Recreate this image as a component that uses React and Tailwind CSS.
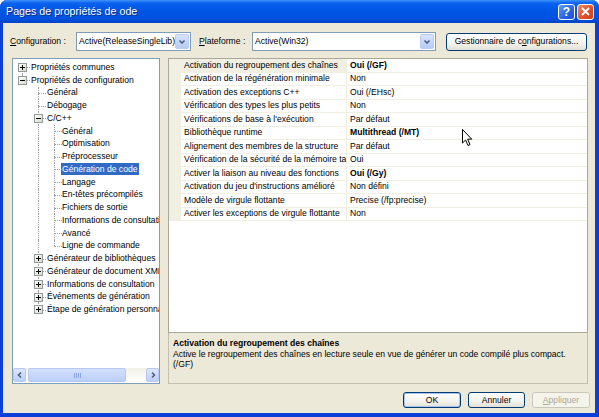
import React from "react";

const tree = [
  { t: "Propriétés communes", l: 0, box: "+", first: true, cont: [] },
  { t: "Propriétés de configuration", l: 0, box: "-", last: true, cont: [] },
  { t: "Général", l: 1, cont: [false] },
  { t: "Débogage", l: 1, cont: [false] },
  { t: "C/C++", l: 1, box: "-", cont: [false] },
  { t: "Général", l: 2, cont: [false, true] },
  { t: "Optimisation", l: 2, cont: [false, true] },
  { t: "Préprocesseur", l: 2, cont: [false, true] },
  { t: "Génération de code", l: 2, sel: true, cont: [false, true] },
  { t: "Langage", l: 2, cont: [false, true] },
  { t: "En-têtes précompilés", l: 2, cont: [false, true] },
  { t: "Fichiers de sortie", l: 2, cont: [false, true] },
  { t: "Informations de consultation", l: 2, cont: [false, true] },
  { t: "Avancé", l: 2, cont: [false, true] },
  { t: "Ligne de commande", l: 2, last: true, cont: [false, true] },
  { t: "Générateur de bibliothèques", l: 1, box: "+", cont: [false] },
  { t: "Générateur de document XML", l: 1, box: "+", cont: [false] },
  { t: "Informations de consultation", l: 1, box: "+", cont: [false] },
  { t: "Événements de génération", l: 1, box: "+", cont: [false] },
  { t: "Étape de génération personnalisée", l: 1, box: "+", last: true, cont: [false] },
];

// connector positions per level (x of the vertical guide)
const guideLeft = ["left-[9px]", "left-[25px]", "left-[41px]"];
const boxLeft = ["left-[5px]", "left-[21px]", "left-[37px]"];
const textPad = ["pl-[17px]", "pl-[33px]", "pl-[48px]"];

const props = [
  ["Activation du regroupement des chaînes", "Oui (/GF)", true],
  ["Activation de la régénération minimale", "Non"],
  ["Activation des exceptions C++", "Oui (/EHsc)"],
  ["Vérification des types les plus petits", "Non"],
  ["Vérifications de base à l'exécution", "Par défaut"],
  ["Bibliothèque runtime", "Multithread (/MT)", true],
  ["Alignement des membres de la structure", "Par défaut"],
  ["Vérification de la sécurité de la mémoire tampon", "Oui"],
  ["Activer la liaison au niveau des fonctions", "Oui (/Gy)", true],
  ["Activation du jeu d'instructions amélioré", "Non défini"],
  ["Modèle de virgule flottante", "Precise (/fp:precise)"],
  ["Activer les exceptions de virgule flottante", "Non"],
];

function Chevron({ dir = "down" }) {
  const d = {
    down: "M1.5 2.5 L4 5 L6.5 2.5",
    left: "M5 1.5 L2.5 4 L5 6.5",
    right: "M3 1.5 L5.5 4 L3 6.5",
  }[dir];
  return (
    <svg width="8" height="8" viewBox="0 0 8 8">
      <path d={d} fill="none" stroke="#4d6185" strokeWidth="1.6" />
    </svg>
  );
}

function Combo({ width, text }) {
  return (
    <div className={`${width} h-[19px] bg-white border border-[#7f9db9] flex items-center`}>
      <span className="flex-1 pl-[2px] truncate">{text}</span>
      <div className="w-[14px] h-[15px] mr-[1px] rounded-[2px] border border-[#b9cdf5] bg-[linear-gradient(to_bottom,#d8e4fd,#b7cbf6)] flex items-center justify-center">
        <Chevron />
      </div>
    </div>
  );
}

function XpButton({ children, className = "", isDefault, disabled }) {
  if (disabled) {
    return (
      <div className={`h-[16px] rounded-[3px] border border-[#c9c7ba] bg-[#f5f4ea] text-[#aca899] flex items-center justify-center ${className}`}>
        {children}
      </div>
    );
  }
  return (
    <div className={`h-[16px] rounded-[3px] border border-[#003c74] bg-[linear-gradient(to_bottom,#ffffff,#f3f2ec_60%,#e3e1d6)] flex items-center justify-center ${isDefault ? "shadow-[inset_0_0_0_1px_#a9c3f0]" : ""} ${className}`}>
      {children}
    </div>
  );
}

function TreeRow({ item }) {
  const l = item.l;
  return (
    <div className="relative h-[12.75px] flex items-center whitespace-nowrap">
      {item.cont.map((c, a) =>
        c ? <div key={a} className={`absolute top-0 bottom-0 ${guideLeft[a]} border-l border-dotted border-[#a0a0a0]`} /> : null
      )}
      <div
        className={`absolute ${guideLeft[l]} border-l border-dotted border-[#a0a0a0] ${item.first ? "top-1/2" : "top-0"} ${item.last ? "bottom-1/2" : "bottom-0"}`}
      />
      <div className={`absolute top-1/2 ${guideLeft[l]} w-[8px] border-t border-dotted border-[#a0a0a0]`} />
      {item.box && (
        <div className={`absolute top-[2px] ${boxLeft[l]} w-[9px] h-[9px] border border-[#919b9c] bg-[linear-gradient(135deg,#ffffff,#dcd9c9)] flex items-center justify-center`}>
          <div className="relative w-[5px] h-[5px]">
            <div className="absolute left-0 right-0 top-[2px] h-[1px] bg-black" />
            {item.box === "+" && <div className="absolute top-0 bottom-0 left-[2px] w-[1px] bg-black" />}
          </div>
        </div>
      )}
      <div className={textPad[l]}>
        <span className={`px-[1px] py-[1px] ${item.sel ? "bg-[#316ac5] text-white" : ""}`}>{item.t}</span>
      </div>
    </div>
  );
}

export default function App() {
  return (
    <div className="relative w-[599px] h-[417px] flex flex-col bg-[#0b3fd8] rounded-t-[7px] overflow-hidden font-['Liberation_Sans',Arial,sans-serif] text-[8.6px] text-black">
      {/* title bar */}
      <div className="h-[23px] shrink-0 flex items-center pl-[6px] pr-[5px] bg-[linear-gradient(to_bottom,#3d92fa_0%,#0a62ef_14%,#0056e6_45%,#0052e0_80%,#0043c8_100%)]">
        <span className="flex-1 text-white text-[10.7px] [text-shadow:1px_1px_0_#0a2a8a]">Pages de propriétés de ode</span>
        <div className="w-[17px] h-[16px] rounded-[3px] border border-white bg-[linear-gradient(135deg,#5e9cff,#2762ea_60%,#1e50d6)] flex items-center justify-center text-white font-bold text-[12px] leading-none">
          ?
        </div>
        <div className="ml-[2px] w-[17px] h-[16px] rounded-[3px] border border-white bg-[linear-gradient(135deg,#f08a62,#e0532b_55%,#c8401a)] flex items-center justify-center">
          <svg width="9" height="9" viewBox="0 0 9 9">
            <path d="M1 1 L8 8 M8 1 L1 8" stroke="white" strokeWidth="1.8" />
          </svg>
        </div>
      </div>

      {/* dialog body */}
      <div className="flex-1 ml-[3px] mr-[4px] mb-[4px] bg-[#ece9d8] flex flex-col">
        <div className="mt-[9px] h-[19px] flex items-center pl-[7px]">
          <span className="w-[66px]">
            <u>C</u>onfiguration :
          </span>
          <Combo width="w-[115px]" text="Active(ReleaseSingleLib)" />
          <span className="ml-[8px] w-[53px]">
            <u>P</u>lateforme :
          </span>
          <Combo width="w-[184px]" text="Active(Win32)" />
          <XpButton className="ml-[10px] w-[141px] !h-[18px]">
            <span>
              Gestionnaire de c<u>o</u>nfigurations...
            </span>
          </XpButton>
        </div>

        <div className="mt-[7px] flex pl-[9px]">
          {/* tree */}
          <div className="w-[148px] h-[326px] border border-[#7f9db9] bg-white flex flex-col">
            <div className="flex-1 overflow-hidden pt-[2px]">
              {tree.map((item, i) => (
                <TreeRow key={i} item={item} />
              ))}
            </div>
            <div className="h-[14px] mb-[1px] flex items-stretch bg-[linear-gradient(to_bottom,#f3f1e7,#fefefb)]">
              <div className="w-[13px] rounded-[2px] border border-[#b6c8f2] bg-[linear-gradient(to_bottom,#dde7fe,#bccff8)] flex items-center justify-center">
                <Chevron dir="left" />
              </div>
              <div className="ml-[2px] w-[98px] rounded-[2px] border border-[#b6c8f2] bg-[linear-gradient(to_bottom,#d4e1fd,#bccff8)] flex items-center justify-center gap-[1px]">
                <div className="w-[1px] h-[5px] bg-[#8ca6e0]" />
                <div className="w-[1px] h-[5px] bg-[#8ca6e0]" />
                <div className="w-[1px] h-[5px] bg-[#8ca6e0]" />
                <div className="w-[1px] h-[5px] bg-[#8ca6e0]" />
              </div>
              <div className="flex-1" />
              <div className="w-[13px] rounded-[2px] border border-[#b6c8f2] bg-[linear-gradient(to_bottom,#dde7fe,#bccff8)] flex items-center justify-center">
                <Chevron dir="right" />
              </div>
            </div>
          </div>

          {/* property grid + description */}
          <div className="ml-[8px] w-[420px] h-[326px] flex flex-col">
            <div className="h-[275px] border border-[#aca899] bg-white overflow-hidden">
              {props.map(([name, value, bold], i) => (
                <div key={i} className="h-[13.5px] flex">
                  <div className="w-[12px] bg-[#f1efe2]" />
                  <div
                    className={`w-[166px] pl-[3px] flex items-center whitespace-nowrap overflow-hidden border-r border-b border-[#f1efe2] ${i === 0 ? "bg-[#f1efe2]" : ""}`}
                  >
                    {name}
                  </div>
                  <div className={`flex-1 pl-[3px] flex items-center whitespace-nowrap border-b border-[#f1efe2] ${bold ? "font-bold" : ""}`}>
                    {value}
                  </div>
                </div>
              ))}
            </div>
            <div className="flex-1 border-x border-b border-[#c3c0b0] pl-[4px] pt-[5px]">
              <div className="font-bold leading-[11px]">Activation du regroupement des chaînes</div>
              <div className="mt-[1px] leading-[9.5px]">
                Active le regroupement des chaînes en lecture seule en vue de générer un code compilé plus compact.
                <br />
                (/GF)
              </div>
            </div>
          </div>
        </div>

        <div className="mt-[8px] flex justify-end pr-[5px] gap-[7px]">
          <XpButton isDefault className="w-[58px]">OK</XpButton>
          <XpButton className="w-[57px]">Annuler</XpButton>
          <XpButton disabled className="w-[58px]">
            <span>
              <u>A</u>ppliquer
            </span>
          </XpButton>
        </div>
      </div>

      {/* mouse pointer */}
      <svg className="absolute left-[462px] top-[129px]" width="11" height="18" viewBox="0 0 11 18">
        <path d="M0.5 0.5 L0.5 14 L3.6 11 L6 16.5 L8 15.6 L5.7 10.2 L9.8 10.2 Z" fill="white" stroke="black" strokeWidth="1" />
      </svg>
    </div>
  );
}
